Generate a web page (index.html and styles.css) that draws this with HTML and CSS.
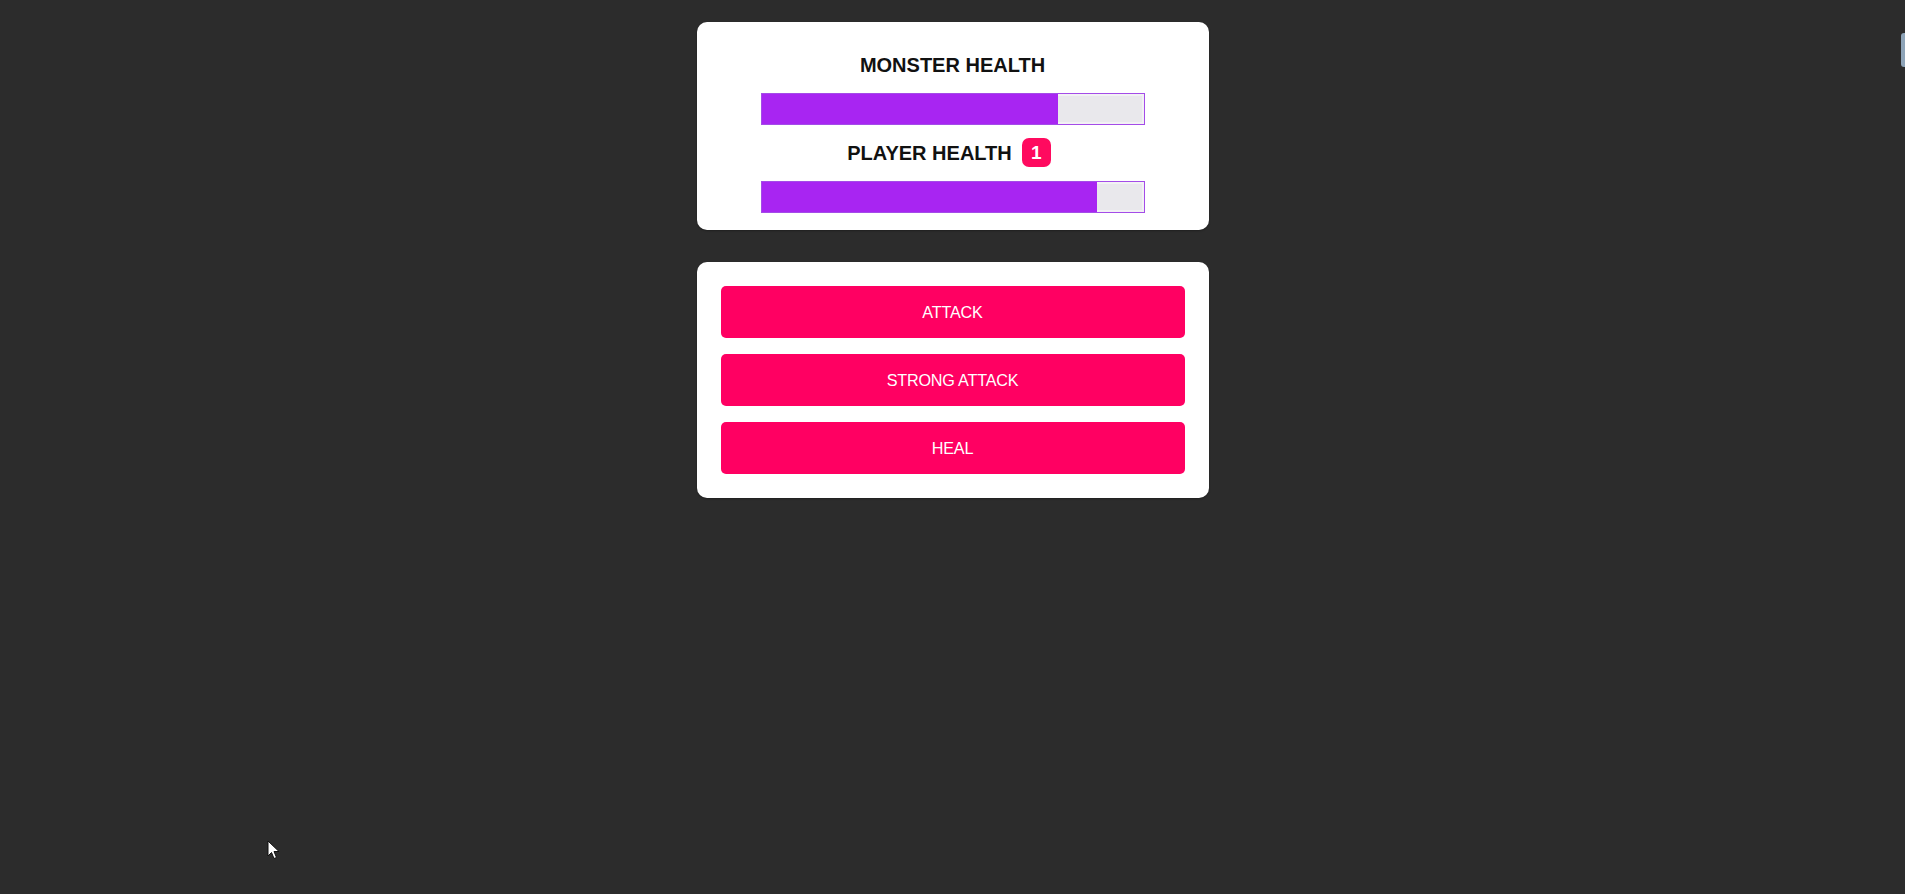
FILE: index.html
```html
<!DOCTYPE html>
<html lang="en">
<head>
<meta charset="utf-8">
<title>Monster Slayer</title>
<link rel="stylesheet" href="styles.css">
</head>
<body>
  <main class="game">
    <section class="card health">
      <h2 class="title">MONSTER HEALTH</h2>
      <div class="bar"><div class="fill" style="width: 77.6%"></div></div>
      <div class="title-row">
        <h2 class="title">PLAYER HEALTH</h2>
        <span class="badge">1</span>
      </div>
      <div class="bar"><div class="fill" style="width: 87.8%"></div></div>
    </section>
    <section class="card controls">
      <button class="btn">ATTACK</button>
      <button class="btn">STRONG ATTACK</button>
      <button class="btn">HEAL</button>
    </section>
  </main>
  <div class="edge-tab"></div>
  <svg class="cursor" width="14" height="20" viewBox="0 0 14 20">
    <path d="M1 1 L1 16 L4.5 12.5 L7 18.5 L9.5 17.5 L7 11.5 L12 11.5 Z" fill="#fff" stroke="#111" stroke-width="1"/>
  </svg>
</body>
</html>
```
FILE: styles.css
```css
html, body {
  margin: 0;
  padding: 0;
}
body {
  background: #2c2c2c;
  font-family: "Liberation Sans", Arial, sans-serif;
  min-height: 894px;
}
.game {
  width: 512px;
  margin: 0 auto;
  padding-top: 22px;
  display: flex;
  flex-direction: column;
  gap: 32px;
}
.card {
  background: #ffffff;
  border-radius: 10px;
  box-shadow: 0 1px 2px rgba(0,0,0,0.3);
}
.health {
  padding: 31px 0 17px;
  display: flex;
  flex-direction: column;
  align-items: center;
}
.title {
  margin: 0;
  font-size: 20px;
  line-height: 24px;
  font-weight: bold;
  color: #111;
}
.health > .title {
  margin-bottom: 16px;
}
.title-row {
  display: flex;
  align-items: center;
  gap: 10px;
  height: 29px;
  margin-bottom: 14px;
  margin-left: -7px;
}
.badge {
  width: 29px;
  height: 29px;
  border-radius: 7px;
  background: #ff0a5f;
  color: #fff;
  font-weight: bold;
  font-size: 19px;
  display: flex;
  align-items: center;
  justify-content: center;
}
.bar {
  width: 384px;
  height: 32px;
  box-sizing: border-box;
  border: 1px solid #a44ce8;
  background: #e9e8ec;
  box-shadow: inset 0 0 0 2px #f2f1f4;
  display: flex;
}
.health > .bar:first-of-type {
  margin-bottom: 13px;
}
.fill {
  height: 100%;
  background: #a825f2;
}
.controls {
  padding: 24px;
  display: flex;
  flex-direction: column;
  gap: 16px;
}
.btn {
  height: 52px;
  border: none;
  border-radius: 5px;
  background: #ff0062;
  color: #fff;
  font-family: "Liberation Sans", Arial, sans-serif;
  font-size: 16.2px;
  letter-spacing: -0.2px;
  cursor: pointer;
}
.edge-tab {
  position: absolute;
  top: 33px;
  right: 0;
  width: 4px;
  height: 34px;
  background: #8ea4b8;
  border-radius: 3px 0 0 3px;
}
.cursor {
  position: absolute;
  left: 267px;
  top: 840px;
}
```
